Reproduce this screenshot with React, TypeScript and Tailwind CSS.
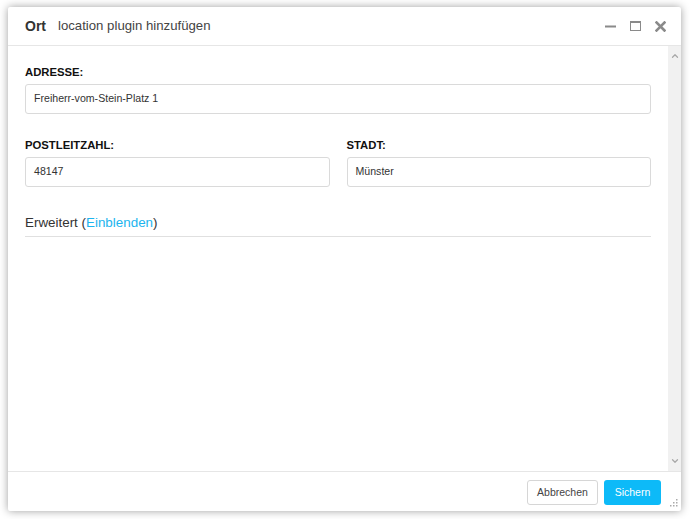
import { ChevronUp, ChevronDown } from "lucide-react";

function Field({ label, value }: { label: string; value: string }) {
    return (
        <div>
            <div className="text-[11.3px] leading-[16px] font-bold text-[#111] mb-[4px]">{label}</div>
            <div className="h-[30px] border border-[#dadada] rounded-[3px] flex items-center pl-[8px] text-[10.6px] text-[#333]">
                {value}
            </div>
        </div>
    );
}

export default function App() {
    return (
        <div className="w-[690px] h-[519px] bg-white pl-[8px] pt-[7px] font-['Liberation_Sans',Arial,sans-serif]">
            <div className="w-[673px] h-[504px] bg-white flex flex-col rounded-[2px] shadow-[0_0_9px_rgba(0,0,0,0.38)]">
                {/* Header */}
                <div className="h-[39px] border-b border-[#e6e6e6] flex items-center pl-[17px] pr-[15px]">
                    <span className="text-[14px] font-bold text-[#333]">Ort</span>
                    <span className="ml-[12px] text-[13.2px] text-[#444]">location plugin hinzufügen</span>
                    <div className="ml-auto flex items-center gap-[14px] text-[#888]">
                        <svg width="11" height="11" viewBox="0 0 11 11">
                            <rect x="0" y="4.5" width="11" height="2" fill="#8a8a8a" />
                        </svg>
                        <svg width="11" height="10" viewBox="0 0 11 10">
                            <rect x="0.5" y="0.5" width="10" height="9" fill="none" stroke="#8a8a8a" />
                            <rect x="0" y="0" width="11" height="2" fill="#8a8a8a" />
                        </svg>
                        <svg width="11" height="11" viewBox="0 0 11 11">
                            <path d="M1.5 1.5 L9.5 9.5 M9.5 1.5 L1.5 9.5" stroke="#8a8a8a" strokeWidth="2.6" strokeLinecap="square" />
                        </svg>
                    </div>
                </div>

                {/* Body */}
                <div className="flex-1 flex min-h-0">
                    <div className="flex-1 px-[17px] pt-[18px]">
                        <Field label="ADRESSE:" value="Freiherr-vom-Stein-Platz 1" />
                        <div className="grid grid-cols-2 gap-x-[17px] mt-[23px]">
                            <Field label="POSTLEITZAHL:" value="48147" />
                            <Field label="STADT:" value="Münster" />
                        </div>
                        <div className="mt-[26px] border-b border-[#e0e0e0] pb-[3px] text-[13.4px] leading-[20px] text-[#333]">
                            Erweitert (<span className="text-[#1cb4ee]">Einblenden</span>)
                        </div>
                    </div>
                    <div className="w-[13px] bg-[#f1f1f1] flex flex-col justify-between items-center py-[5px]">
                        <ChevronUp className="w-[10px] h-[10px] text-[#a8a8a8]" strokeWidth={3} />
                        <ChevronDown className="w-[10px] h-[10px] text-[#a8a8a8]" strokeWidth={3} />
                    </div>
                </div>

                {/* Footer */}
                <div className="relative h-[40px] border-t border-[#e6e6e6] flex items-start justify-end pt-[8px] pr-[20px] gap-[6px]">
                    <button className="h-[25px] w-[71px] border border-[#d6d6d6] rounded-[3px] bg-white text-[10.5px] text-[#444]">
                        Abbrechen
                    </button>
                    <button className="h-[25px] w-[57px] rounded-[3px] bg-[#0dbaf8] text-[10.5px] text-white">
                        Sichern
                    </button>
                    <svg className="absolute right-[3px] bottom-[4px]" width="9" height="9" viewBox="0 0 9 9">
                        <rect x="7" y="1" width="1.5" height="1.5" fill="#aaa" />
                        <rect x="4" y="4" width="1.5" height="1.5" fill="#aaa" />
                        <rect x="7" y="4" width="1.5" height="1.5" fill="#aaa" />
                        <rect x="1" y="7" width="1.5" height="1.5" fill="#aaa" />
                        <rect x="4" y="7" width="1.5" height="1.5" fill="#aaa" />
                        <rect x="7" y="7" width="1.5" height="1.5" fill="#aaa" />
                    </svg>
                </div>
            </div>
        </div>
    );
}
